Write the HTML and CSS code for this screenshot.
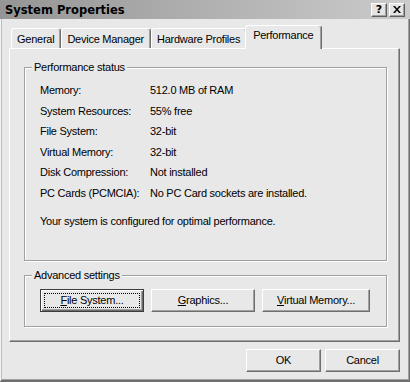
FILE: index.html
```html
<!DOCTYPE html>
<html>
<head>
<meta charset="utf-8">
<title>System Properties</title>
<link rel="stylesheet" href="styles.css">
</head>
<body>
<div class="window">
  <div class="titlebar">
    <span class="title">System Properties</span>
    <div class="caption-buttons">
      <span class="cbtn help">?</span>
      <span class="cbtn close"><svg width="8" height="7" viewBox="0 0 8 7"><path d="M0 0h2l2 2.4 2-2.4h2l-3 3.5 3 3.5h-2l-2-2.4-2 2.4h-2l3-3.5z"/></svg></span>
    </div>
  </div>
  <div class="frame">
    <div class="tabs">
      <div class="tab">General</div>
      <div class="tab">Device Manager</div>
      <div class="tab">Hardware Profiles</div>
      <div class="tab active">Performance</div>
    </div>
    <div class="panel">
      <fieldset class="group status">
        <legend>Performance status</legend>
        <div class="group-body">
          <div class="rows">
            <span>Memory:</span><span>512.0 MB of RAM</span>
            <span>System Resources:</span><span>55% free</span>
            <span>File System:</span><span>32-bit</span>
            <span>Virtual Memory:</span><span>32-bit</span>
            <span>Disk Compression:</span><span>Not installed</span>
            <span>PC Cards (PCMCIA):</span><span>No PC Card sockets are installed.</span>
          </div>
          <p class="note">Your system is configured for optimal performance.</p>
        </div>
      </fieldset>
      <fieldset class="group advanced">
        <legend>Advanced settings</legend>
        <div class="group-body btnrow">
          <button class="btn default wide"><span class="focus"><u>F</u>ile System...</span></button>
          <button class="btn wide"><span class="label"><u>G</u>raphics...</span></button>
          <button class="btn wider"><span class="label"><u>V</u>irtual Memory...</span></button>
        </div>
      </fieldset>
    </div>
    <div class="footer">
      <button class="btn small"><span class="label">OK</span></button>
      <button class="btn small"><span class="label">Cancel</span></button>
    </div>
  </div>
</div>
</body>
</html>
```

FILE: styles.css
```css
* { box-sizing: border-box; }

html, body {
  margin: 0;
  padding: 0;
}

body {
  width: 410px;
  height: 382px;
  overflow: hidden;
  background: #e8e8e8;
  font-family: "Liberation Sans", Arial, sans-serif;
  font-size: 11px;
  letter-spacing: -0.25px;
  color: #000;
}

.window {
  width: 410px;
  height: 382px;
  display: flex;
  flex-direction: column;
  background: #e8e8e8;
}

.titlebar {
  height: 19px;
  flex: none;
  display: flex;
  align-items: center;
  justify-content: space-between;
  padding: 0 5px 0 5px;
  background: linear-gradient(90deg, #959595, #cbcbcb);
}

.title {
  font-family: "DejaVu Sans", Verdana, sans-serif;
  font-weight: bold;
  font-size: 11.5px;
  letter-spacing: 0;
  color: #000;
}

.caption-buttons {
  display: flex;
  gap: 2px;
}

.cbtn {
  width: 16px;
  height: 14px;
  display: flex;
  align-items: center;
  justify-content: center;
  background: #e4e4e4;
  border: 1px solid;
  border-color: #fff #5e5e5e #5e5e5e #fff;
  box-shadow: inset -1px -1px #a0a0a0;
  font-family: "DejaVu Sans", Verdana, sans-serif;
  font-weight: bold;
  font-size: 11px;
  letter-spacing: 0;
  line-height: 1;
}

.cbtn svg {
  display: block;
  fill: #000;
}

.frame {
  flex: 1;
  display: flex;
  flex-direction: column;
  padding: 6px 9px 8px 8px;
  border-left: 1px solid #f4f4f4;
  border-bottom: 2px solid #6e6e6e;
  border-right: 1px solid #6e6e6e;
  box-shadow: inset 1px 0 #bdbdbd, inset -1px -1px #a0a0a0;
}

.tabs {
  height: 23px;
  flex: none;
  display: flex;
  align-items: flex-end;
  padding-left: 2px;
}

.tab {
  height: 20px;
  padding: 4px 6px 0 5px;
  line-height: 13px;
  border-top: 1px solid #fff;
  border-left: 1px solid #fff;
  border-right: 1px solid #6e6e6e;
  border-radius: 3px 3px 0 0;
  box-shadow: inset -1px 0 #a0a0a0;
  white-space: nowrap;
}

.tab.active {
  position: relative;
  z-index: 1;
  height: 24px;
  margin: 0 -2px -1px -2px;
  padding: 3px 8px 0 7px;
  background: #e8e8e8;
}

.panel {
  height: 294px;
  flex: none;
  display: flex;
  flex-direction: column;
  padding: 12px 12px 0 14px;
  border: 1px solid;
  border-color: #fff #6e6e6e #6e6e6e #fff;
  box-shadow: inset -1px -1px #a0a0a0;
}

.group {
  margin: 0;
  padding: 0;
  min-width: 0;
  border: 1px solid #a0a0a0;
  box-shadow: inset 1px 1px #fff, 1px 1px #fff;
}

.group legend {
  margin-left: 7px;
  padding: 0 2px;
  line-height: 13px;
  background: #e8e8e8;
}

.status {
  height: 200px;
}

.advanced {
  height: 58px;
  margin-top: 8px;
}

.group-body {
  padding: 10px 0 0 15px;
}

.rows {
  display: grid;
  grid-template-columns: 110px auto;
  row-gap: 7.6px;
  line-height: 13px;
}

.note {
  margin: 15px 0 0 0;
  line-height: 13px;
}

.btnrow {
  display: flex;
  gap: 7px;
  padding-top: 7px;
}

.btn {
  height: 23px;
  padding: 0;
  display: flex;
  align-items: stretch;
  background: #e8e8e8;
  border: 1px solid;
  border-color: #fff #6e6e6e #6e6e6e #fff;
  box-shadow: inset -1px -1px #a0a0a0;
  font: inherit;
  letter-spacing: inherit;
  color: #000;
}

.btn .label,
.btn .focus {
  flex: 1;
  display: flex;
  align-items: center;
  justify-content: center;
  line-height: 13px;
}

.btn.default {
  border-color: #3c3c3c;
  box-shadow: inset 1px 1px #fff, inset -1px -1px #6e6e6e, inset -2px -2px #a0a0a0;
  padding: 3px;
}

.btn.default .focus {
  border: 1px dotted #000;
}

.wide { width: 104px; }
.wider { width: 108px; }
.small { width: 75px; }

.footer {
  display: flex;
  justify-content: flex-end;
  gap: 4px;
  margin-top: 7px;
}
```
